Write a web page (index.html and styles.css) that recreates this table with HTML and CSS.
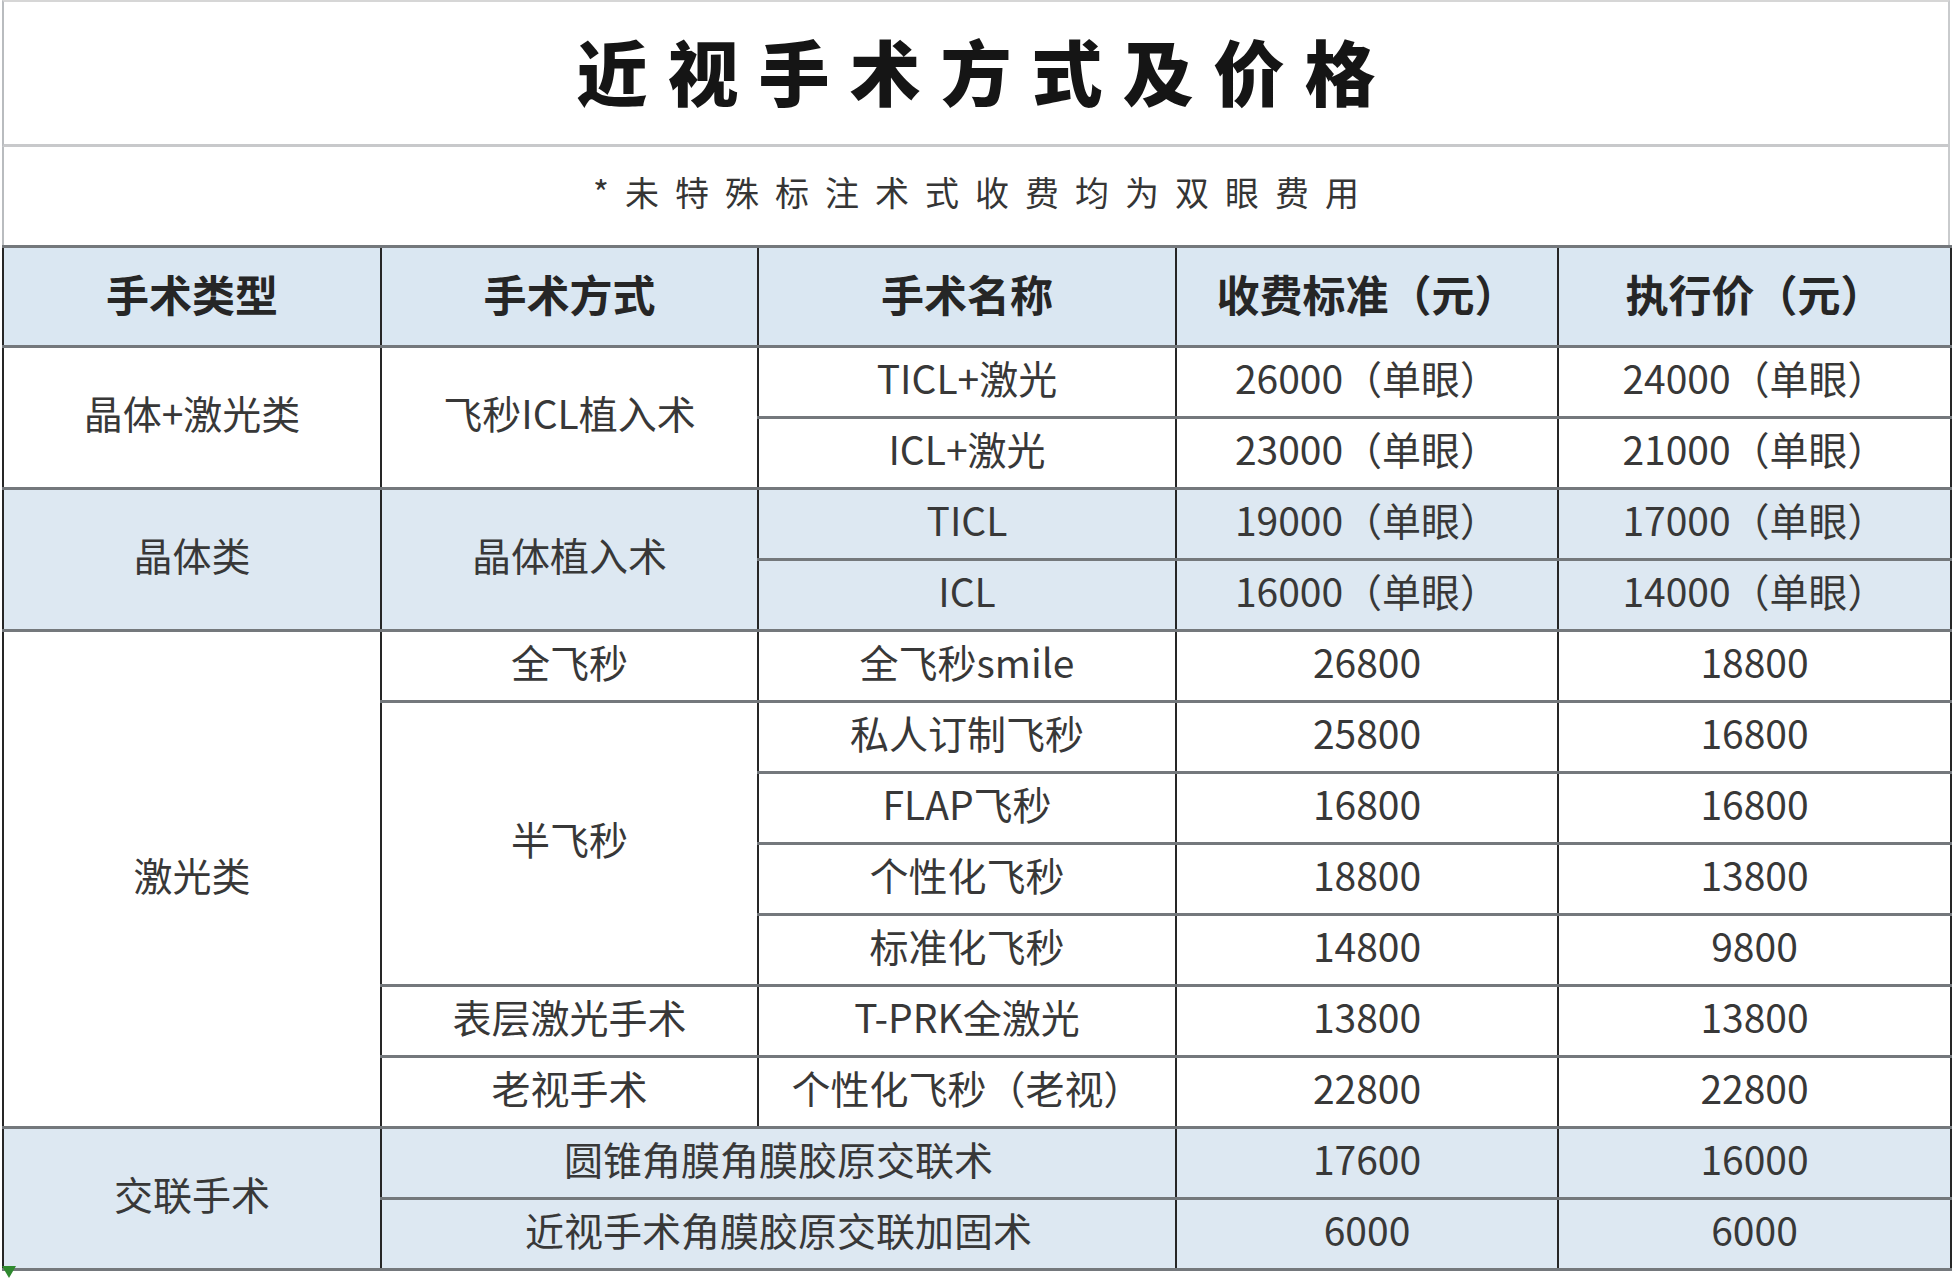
FILE: index.html
```html
<!DOCTYPE html>
<html lang="zh-CN">
<head>
<meta charset="utf-8">
<title>近视手术方式及价格</title>
<link rel="stylesheet" href="styles.css">
</head>
<body>
<div class="sheet">
  <div class="title-band"><h1 class="title">近视手术方式及价格</h1></div>
  <div class="note-band"><p class="note">*未特殊标注术式收费均为双眼费用</p></div>
  <table class="price">
    <colgroup>
      <col class="c1"><col class="c2"><col class="c3"><col class="c4"><col class="c5">
    </colgroup>
    <thead>
      <tr class="head">
        <th>手术类型</th><th>手术方式</th><th>手术名称</th><th>收费标准（元）</th><th>执行价（元）</th>
      </tr>
    </thead>
    <tbody>
      <tr><td rowspan="2">晶体+激光类</td><td rowspan="2">飞秒ICL植入术</td><td>TICL+激光</td><td>26000（单眼）</td><td>24000（单眼）</td></tr>
      <tr><td>ICL+激光</td><td>23000（单眼）</td><td>21000（单眼）</td></tr>
      <tr class="blue"><td rowspan="2">晶体类</td><td rowspan="2">晶体植入术</td><td>TICL</td><td>19000（单眼）</td><td>17000（单眼）</td></tr>
      <tr class="blue"><td>ICL</td><td>16000（单眼）</td><td>14000（单眼）</td></tr>
      <tr><td rowspan="7">激光类</td><td>全飞秒</td><td>全飞秒smile</td><td>26800</td><td>18800</td></tr>
      <tr><td rowspan="4">半飞秒</td><td>私人订制飞秒</td><td>25800</td><td>16800</td></tr>
      <tr><td>FLAP飞秒</td><td>16800</td><td>16800</td></tr>
      <tr><td>个性化飞秒</td><td>18800</td><td>13800</td></tr>
      <tr><td>标准化飞秒</td><td>14800</td><td>9800</td></tr>
      <tr><td>表层激光手术</td><td>T-PRK全激光</td><td>13800</td><td>13800</td></tr>
      <tr><td>老视手术</td><td>个性化飞秒（老视）</td><td>22800</td><td>22800</td></tr>
      <tr class="blue"><td rowspan="2">交联手术</td><td colspan="2">圆锥角膜角膜胶原交联术</td><td>17600</td><td>16000</td></tr>
      <tr class="blue"><td colspan="2">近视手术角膜胶原交联加固术</td><td>6000</td><td>6000</td></tr>
    </tbody>
  </table>
  <span class="corner-mark"></span>
</div>
</body>
</html>
```
FILE: styles.css
```css
html, body {
  margin: 0;
  padding: 0;
  background: #ffffff;
}

body {
  font-family: "Noto Sans CJK SC", "Noto Sans", sans-serif;
  color: #333333;
}

.sheet {
  position: relative;
  width: 1948px;
  margin-left: 2px;
  height: 1280px;
}

.title-band {
  border-top: 2px solid #d6d6d6;
  border-left: 2px solid #b9bcbf;
  border-right: 2px solid #c9cbcd;
  border-bottom: 3px solid #c8c9cb;
  box-sizing: border-box;
  height: 147px;
  display: flex;
  align-items: center;
  justify-content: center;
}

.title {
  margin: 0;
  font-size: 71px;
  font-weight: 900;
  color: #151515;
  letter-spacing: 20px;
  text-indent: 20px;
  line-height: 1;
  padding-bottom: 8px;
}

.note-band {
  height: 98px;
  box-sizing: border-box;
  border-left: 2px solid #b9bcbf;
  border-right: 2px solid #c9cbcd;
  display: flex;
  align-items: center;
  justify-content: center;
}

.note {
  margin: 0;
  font-size: 34px;
  letter-spacing: 16px;
  text-indent: 16px;
  color: #353535;
  line-height: 1;
  padding-bottom: 8px;
}

.price {
  width: 1948px;
  border-collapse: collapse;
  table-layout: fixed;
}

.c1 { width: 378px; }
.c2 { width: 377px; }
.c3 { width: 418px; }
.c4 { width: 382px; }
.c5 { width: 393px; }

.price th,
.price td {
  border-top: 3px solid #74787c;
  border-bottom: 3px solid #74787c;
  border-left: 2px solid #262626;
  border-right: 2px solid #262626;
  text-align: center;
  vertical-align: middle;
  padding: 0;
  line-height: 1;
  white-space: nowrap;
}

.price th {
  height: 91px;
  padding-bottom: 6px;
  background: #dae7f2;
  font-size: 43px;
  font-weight: 700;
  color: #262626;
}

.price td {
  height: 58px;
  padding-bottom: 10px;
  font-size: 39px;
  font-weight: 400;
  color: #383838;
  background: #ffffff;
}

.price tr.blue td {
  background: #dde8f2;
}

.corner-mark {
  position: absolute;
  left: 0;
  top: 1266px;
  width: 0;
  height: 0;
  border-left: 7px solid transparent;
  border-right: 7px solid transparent;
  border-top: 12px solid #2f8a2f;
}
```
